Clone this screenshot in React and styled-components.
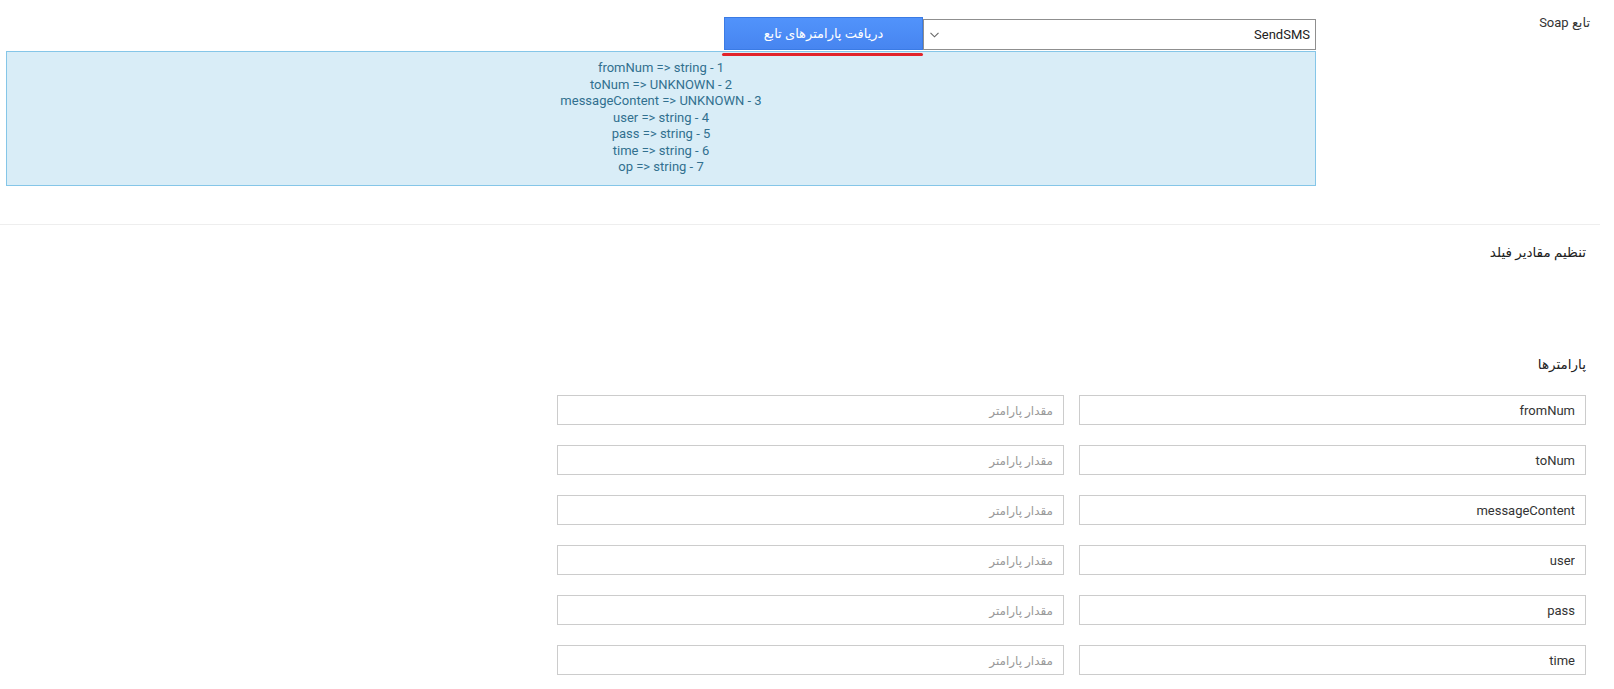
import React from "react";
import styled, { createGlobalStyle } from "styled-components";

const Global = createGlobalStyle`
  html, body { margin: 0; padding: 0; background: #fff; }
  body { font-family: Roboto, "DejaVu Sans", sans-serif; color: #333; }
  * { box-sizing: border-box; }
`;

const Page = styled.div`
  width: 1600px;
  direction: rtl;
  font-size: 13px;
`;

const TopGroup = styled.div`
  display: flex;
  align-items: flex-start;
`;

const SideLabel = styled.div`
  width: 284px;
  padding: 15px 10px 0 0;
  font-size: 13px;
  line-height: 16px;
  color: #333;
`;

const Control = styled.div`
  width: 1310px;
  padding-top: 17px;
`;

const SelectRow = styled.div`
  display: flex;
  align-items: flex-start;
`;

const SelectBox = styled.div`
  width: 393px;
  height: 31px;
  margin-top: 2px;
  border: 1px solid #8f8f8f;
  background: #fff;
  display: flex;
  align-items: center;
  justify-content: space-between;
  padding: 0 5px 0 6px;
  font-size: 13px;
  color: #222;
`;

const Chevron = styled.svg`
  width: 9px;
  height: 6px;
  display: block;
`;

const ButtonWrap = styled.div`
  position: relative;
`;

const FetchButton = styled.button`
  width: 199px;
  height: 33px;
  border: 1px solid #3b7be4;
  background: linear-gradient(#5193fb, #4785f0);
  color: #fff;
  font-family: Roboto, "DejaVu Sans", sans-serif;
  font-size: 13px;
  font-weight: 500;
  padding: 0;
  cursor: pointer;
  display: block;
`;

const Underline = styled.div`
  position: absolute;
  left: -2px;
  right: 0;
  top: 36px;
  height: 3px;
  border-radius: 2px;
  background: #e2232a;
  z-index: 2;
`;

const InfoBox = styled.div`
  margin-top: 1px;
  height: 135px;
  background: #d9edf7;
  border: 1px solid #85c6e8;
  color: #31708f;
  direction: ltr;
  text-align: center;
  padding-top: 8px;
  font-size: 13px;
  line-height: 16.5px;
`;

const InfoLine = styled.div``;

const Divider = styled.div`
  margin-top: 38px;
  border-top: 1px solid #eee;
`;

const SectionTitle = styled.div`
  padding-right: 14px;
  margin-top: ${(p) => p.$top}px;
  font-size: 13.5px;
  line-height: 20px;
  color: #222;
`;

const ParamGrid = styled.div`
  margin-top: 21px;
  padding-right: 14px;
  display: grid;
  grid-template-columns: 507px 507px;
  column-gap: 15px;
  row-gap: 20px;
`;

const TextInput = styled.input`
  height: 30px;
  width: 507px;
  border: 1px solid #ccc;
  background: #fff;
  padding: 0 10px;
  direction: rtl;
  text-align: right;
  font-family: Roboto, "DejaVu Sans", sans-serif;
  font-size: 13px;
  color: #333;
  outline: none;
  &::placeholder {
    color: #999;
    font-size: 12px;
  }
`;

const params = [
  ["fromNum", "string"],
  ["toNum", "UNKNOWN"],
  ["messageContent", "UNKNOWN"],
  ["user", "string"],
  ["pass", "string"],
  ["time", "string"],
  ["op", "string"],
];

export default function App() {
  return (
    <>
      <Global />
      <Page dir="rtl">
        <TopGroup>
          <SideLabel>تابع Soap</SideLabel>
          <Control>
            <SelectRow>
              <SelectBox>
                <span>SendSMS</span>
                <Chevron viewBox="0 0 9 6">
                  <path d="M0.5 0.8 L4.5 4.8 L8.5 0.8" fill="none" stroke="#666" strokeWidth="1.1" />
                </Chevron>
              </SelectBox>
              <ButtonWrap>
                <FetchButton>دریافت پارامترهای تابع</FetchButton>
                <Underline />
              </ButtonWrap>
            </SelectRow>
            <InfoBox>
              {params.map(([n, t], i) => (
                <InfoLine key={n}>
                  {n} =&gt; {t} - {i + 1}
                </InfoLine>
              ))}
            </InfoBox>
          </Control>
        </TopGroup>
        <Divider />
        <SectionTitle $top={17}>تنظیم مقادیر فیلد</SectionTitle>
        <SectionTitle $top={92}>پارامترها</SectionTitle>
        <ParamGrid>
          {params.slice(0, 6).map(([n]) => (
            <React.Fragment key={n}>
              <TextInput defaultValue={n} />
              <TextInput placeholder="مقدار پارامتر" />
            </React.Fragment>
          ))}
        </ParamGrid>
      </Page>
    </>
  );
}
